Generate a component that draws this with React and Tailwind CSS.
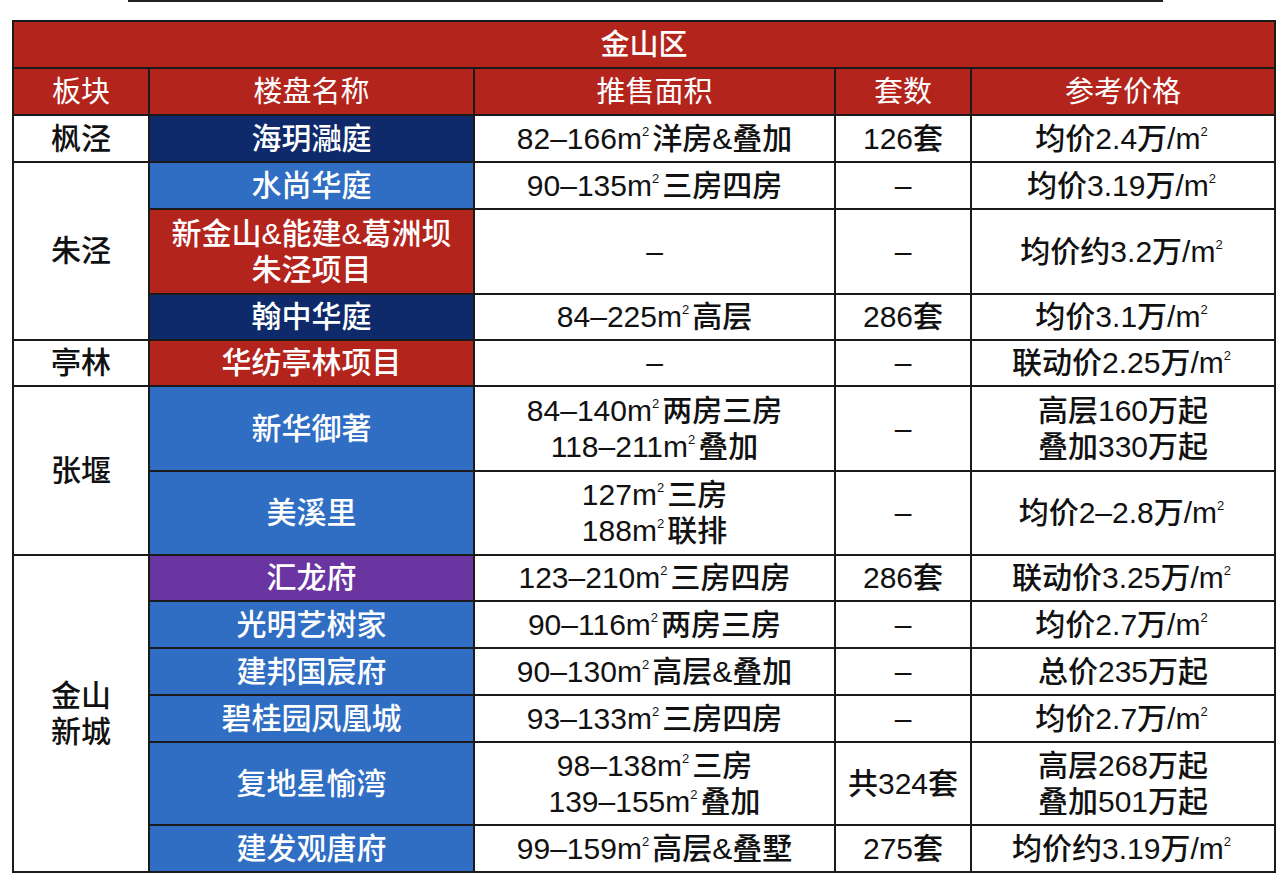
import React from "react";

const RED = "bg-[#b3241d]";
const NAVY = "bg-[#0e2a6a]";
const BLUE = "bg-[#2f6ec3]";
const PURPLE = "bg-[#6a35a1]";

// m² as in the sheet: a small raised 2 after the m
const Sq = () => (
  <>
    m<span className="text-[13px] align-top leading-[22px] mr-[3px]">2</span>
  </>
);

const groups = [
  {
    area: "枫泾",
    span: "row-span-1",
    rows: [
      { name: "海玥瀜庭", bg: NAVY, size: <>82–166<Sq />洋房&叠加</>, count: "126套", price: <>均价2.4万/<Sq /></> },
    ],
  },
  {
    area: "朱泾",
    span: "row-span-3",
    rows: [
      { name: "水尚华庭", bg: BLUE, size: <>90–135<Sq />三房四房</>, count: "–", price: <>均价3.19万/<Sq /></> },
      { name: <>新金山&能建&葛洲坝<br />朱泾项目</>, bg: RED, size: "–", count: "–", price: <>均价约3.2万/<Sq /></> },
      { name: "翰中华庭", bg: NAVY, size: <>84–225<Sq />高层</>, count: "286套", price: <>均价3.1万/<Sq /></> },
    ],
  },
  {
    area: "亭林",
    span: "row-span-1",
    rows: [
      { name: "华纺亭林项目", bg: RED, size: "–", count: "–", price: <>联动价2.25万/<Sq /></> },
    ],
  },
  {
    area: "张堰",
    span: "row-span-2",
    rows: [
      { name: "新华御著", bg: BLUE, size: <>84–140<Sq />两房三房<br />118–211<Sq />叠加</>, count: "–", price: <>高层160万起<br />叠加330万起</> },
      { name: "美溪里", bg: BLUE, size: <>127<Sq />三房<br />188<Sq />联排</>, count: "–", price: <>均价2–2.8万/<Sq /></> },
    ],
  },
  {
    area: <>金山<br />新城</>,
    span: "row-span-6",
    rows: [
      { name: "汇龙府", bg: PURPLE, size: <>123–210<Sq />三房四房</>, count: "286套", price: <>联动价3.25万/<Sq /></> },
      { name: "光明艺树家", bg: BLUE, size: <>90–116<Sq />两房三房</>, count: "–", price: <>均价2.7万/<Sq /></> },
      { name: "建邦国宸府", bg: BLUE, size: <>90–130<Sq />高层&叠加</>, count: "–", price: <>总价235万起</> },
      { name: "碧桂园凤凰城", bg: BLUE, size: <>93–133<Sq />三房四房</>, count: "–", price: <>均价2.7万/<Sq /></> },
      { name: "复地星愉湾", bg: BLUE, size: <>98–138<Sq />三房<br />139–155<Sq />叠加</>, count: "共324套", price: <>高层268万起<br />叠加501万起</> },
      { name: "建发观唐府", bg: BLUE, size: <>99–159<Sq />高层&叠墅</>, count: "275套", price: <>均价约3.19万/<Sq /></> },
    ],
  },
];

const Cell = ({ className = "", children }) => (
  <div className={`flex items-center justify-center text-center leading-[36px] ${className}`}>
    <div>{children}</div>
  </div>
);

export default function App() {
  return (
    <div className="min-h-screen bg-white font-['Liberation_Sans','Noto_Sans_CJK_SC',sans-serif] font-medium text-[30px] text-[#111]">
      <div className="ml-[128px] w-[1035px] h-[2px] bg-[#222]" />
      <div className="mt-[18px] ml-[12px] w-[1264px] bg-[#1a1a1a] p-[2px] grid gap-[2px] grid-cols-[134px_323px_359px_134px_302px] grid-rows-[45px_45px_45px_45px_83px_44px_44px_83px_82px_44px_45px_45px_45px_81px_45px]">
        <Cell className={`col-span-5 ${RED} text-white text-[29px]`}>金山区</Cell>
        {["板块", "楼盘名称", "推售面积", "套数", "参考价格"].map((h) => (
          <Cell key={h} className={`${RED} text-white text-[29px] font-normal`}>{h}</Cell>
        ))}
        {groups.map((g, gi) => (
          <React.Fragment key={gi}>
            <Cell className={`${g.span} bg-white leading-[35px]`}>{g.area}</Cell>
            {g.rows.map((r, ri) => (
              <React.Fragment key={ri}>
                <Cell className={`${r.bg} text-white`}>{r.name}</Cell>
                <Cell className="bg-white">{r.size}</Cell>
                <Cell className="bg-white">{r.count}</Cell>
                <Cell className="bg-white">{r.price}</Cell>
              </React.Fragment>
            ))}
          </React.Fragment>
        ))}
      </div>
    </div>
  );
}
